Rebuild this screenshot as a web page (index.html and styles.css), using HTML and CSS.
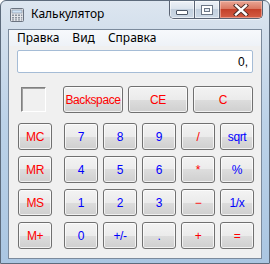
FILE: index.html
```html
<!DOCTYPE html>
<html>
<head>
<meta charset="utf-8">
<link rel="stylesheet" href="styles.css">
</head>
<body>
<div class="window">
  <div class="titlebar">
    <svg class="appicon" width="14" height="14" viewBox="0 0 14 14">
      <rect x="0.5" y="0.5" width="13" height="13" rx="1" fill="#e4e6ea" stroke="#6b7380"/>
      <rect x="2" y="2" width="10" height="3" fill="#cfe3f5" stroke="#7d8896" stroke-width="0.6"/>
      <g fill="#8a929d">
        <rect x="2" y="6.5" width="2" height="1.5"/><rect x="5" y="6.5" width="2" height="1.5"/><rect x="8" y="6.5" width="2" height="1.5"/><rect x="11" y="6.5" width="1.2" height="1.5"/>
        <rect x="2" y="9" width="2" height="1.5"/><rect x="5" y="9" width="2" height="1.5"/><rect x="8" y="9" width="2" height="1.5"/><rect x="11" y="9" width="1.2" height="1.5"/>
        <rect x="2" y="11.3" width="2" height="1.2"/><rect x="5" y="11.3" width="2" height="1.2"/><rect x="8" y="11.3" width="2" height="1.2"/><rect x="11" y="11.3" width="1.2" height="1.2"/>
      </g>
    </svg>
    <span class="title">Калькулятор</span>
    <div class="caption">
      <div class="cap min"><span class="g-min"></span></div>
      <div class="cap max"><span class="g-max"></span></div>
      <div class="cap close">
        <svg width="16" height="12" viewBox="0 0 16 12">
          <path d="M3 1.5 L13 10.5 M13 1.5 L3 10.5" stroke="#4a2a24" stroke-width="4.2" stroke-linecap="square" fill="none"/>
          <path d="M3 1.5 L13 10.5 M13 1.5 L3 10.5" stroke="#ffffff" stroke-width="2.4" stroke-linecap="square" fill="none"/>
        </svg>
      </div>
    </div>
  </div>
  <div class="client">
    <div class="menubar">
      <span class="menu">Правка</span>
      <span class="menu">Вид</span>
      <span class="menu">Справка</span>
    </div>
    <div class="panel">
      <div class="display">0,</div>
      <div class="editrow">
        <div class="membox"></div>
        <div class="edits">
          <div class="btn red wide">Backspace</div>
          <div class="btn red wide">CE</div>
          <div class="btn red wide">C</div>
        </div>
      </div>
      <div class="keys">
        <div class="btn red">MC</div>
        <div class="btn blue">7</div>
        <div class="btn blue">8</div>
        <div class="btn blue">9</div>
        <div class="btn red">/</div>
        <div class="btn blue">sqrt</div>

        <div class="btn red">MR</div>
        <div class="btn blue">4</div>
        <div class="btn blue">5</div>
        <div class="btn blue">6</div>
        <div class="btn red">*</div>
        <div class="btn blue">%</div>

        <div class="btn red">MS</div>
        <div class="btn blue">1</div>
        <div class="btn blue">2</div>
        <div class="btn blue">3</div>
        <div class="btn red">&minus;</div>
        <div class="btn blue">1/x</div>

        <div class="btn red">M+</div>
        <div class="btn blue">0</div>
        <div class="btn blue">+/-</div>
        <div class="btn blue">.</div>
        <div class="btn red">+</div>
        <div class="btn red">=</div>
      </div>
    </div>
  </div>
</div>
</body>
</html>
```

FILE: styles.css
```css
* { box-sizing: border-box; }
html, body { margin: 0; padding: 0; }
body { width: 270px; height: 264px; overflow: hidden; background: #ffffff; }

.window {
  width: 270px;
  height: 264px;
  display: flex;
  flex-direction: column;
  padding: 0 7px 4px 7px;
  background: linear-gradient(to bottom, #dde6f0 0px, #d3dfec 30px, #bcd2e8 120px, #aac6e2 264px);
  border: 1px solid #5d6b7c;
  border-radius: 6px 6px 0 0;
}

.titlebar {
  height: 28px;
  display: flex;
  align-items: flex-start;
  flex: none;
}
.appicon { margin: 7px 0 0 2px; flex: none; }
.title {
  margin: 5px 0 0 7px;
  font-family: "Noto Sans", "DejaVu Sans", sans-serif;
  font-size: 12px;
  line-height: 16px;
  color: #000000;
}

.caption {
  margin-left: auto;
  margin-right: -1px;
  display: flex;
  height: 18px;
  border: 1px solid #5a6373;
  border-top: none;
  border-radius: 0 0 5px 5px;
  overflow: hidden;
  box-shadow: 0 1px 0 rgba(255,255,255,0.6);
}
.cap {
  height: 17px;
  display: flex;
  align-items: center;
  justify-content: center;
}
.min, .max {
  width: 25px;
  border-right: 1px solid #5a6373;
  background: linear-gradient(to bottom, #eef2f7 0%, #d9e2ec 50%, #c3d0de 50%, #cdd9e6 100%);
  box-shadow: inset 0 0 0 1px rgba(255,255,255,0.55);
}
.close {
  width: 42px;
  background: linear-gradient(to bottom, #e9a796 0%, #d9735c 50%, #c4412a 50%, #d45e45 100%);
  box-shadow: inset 0 0 0 1px rgba(255,210,200,0.5);
}
.g-min {
  display: block;
  width: 12px;
  height: 5px;
  margin-top: 6px;
  background: #ffffff;
  border: 1px solid #4d5766;
  border-radius: 1px;
}
.g-max {
  display: block;
  width: 12px;
  height: 10px;
  border: 1px solid #6d7786;
  background: #e6ecf3;
  box-shadow: inset 0 0 0 2px #ffffff, inset 0 0 0 3px #6d7786;
}

.client {
  flex: 1;
  display: flex;
  flex-direction: column;
  border: 1px solid #7b8a9c;
  background: #f0f0f0;
}

.menubar {
  height: 16px;
  display: flex;
  align-items: center;
  padding-left: 8px;
  background: linear-gradient(to bottom, #f7f9fc, #eef2f7);
  font-family: "Noto Sans", "DejaVu Sans", sans-serif;
  font-size: 12px;
  color: #000000;
}
.menu { margin-right: 13px; line-height: 16px; }

.panel {
  flex: 1;
  padding: 4px 8px 0 8px;
  font-family: "Liberation Sans", Arial, sans-serif;
  font-size: 11px;
}

.display {
  height: 23px;
  background: #ffffff;
  border: 1px solid #a5bcd6;
  border-radius: 2px;
  text-align: right;
  padding: 4px 4px 0 0;
  line-height: 14px;
  color: #000000;
  font-size: 12px;
}

.editrow {
  display: flex;
  margin-top: 13px;
  height: 27px;
}
.membox {
  width: 26px;
  height: 25px;
  margin: 1px 0 0 4px;
  border: 1px solid;
  border-color: #808080 #ffffff #ffffff #808080;
  box-shadow: inset 1px 1px 0 #a0a0a0;
}
.edits {
  display: flex;
  gap: 5px;
  margin-left: 17px;
}

.btn {
  width: 34px;
  height: 27px;
  display: flex;
  align-items: center;
  justify-content: center;
  border: 1px solid #707070;
  border-radius: 3px;
  background: linear-gradient(to bottom, #f3f3f3 0%, #ebebeb 50%, #dddddd 50%, #cfcfcf 100%);
  box-shadow: inset 0 0 0 1px rgba(255,255,255,0.7);
  font-family: "Liberation Sans", Arial, sans-serif;
  font-size: 12px;
  letter-spacing: -0.4px;
  line-height: 14px;
}
.btn.wide { width: 60px; }
.red { color: #ff0000; }
.blue { color: #0000ff; }

.keys {
  display: grid;
  grid-template-columns: 41px repeat(5, 34px);
  column-gap: 5px;
  row-gap: 6px;
  margin: 10px 0 0 1px;
}
```
